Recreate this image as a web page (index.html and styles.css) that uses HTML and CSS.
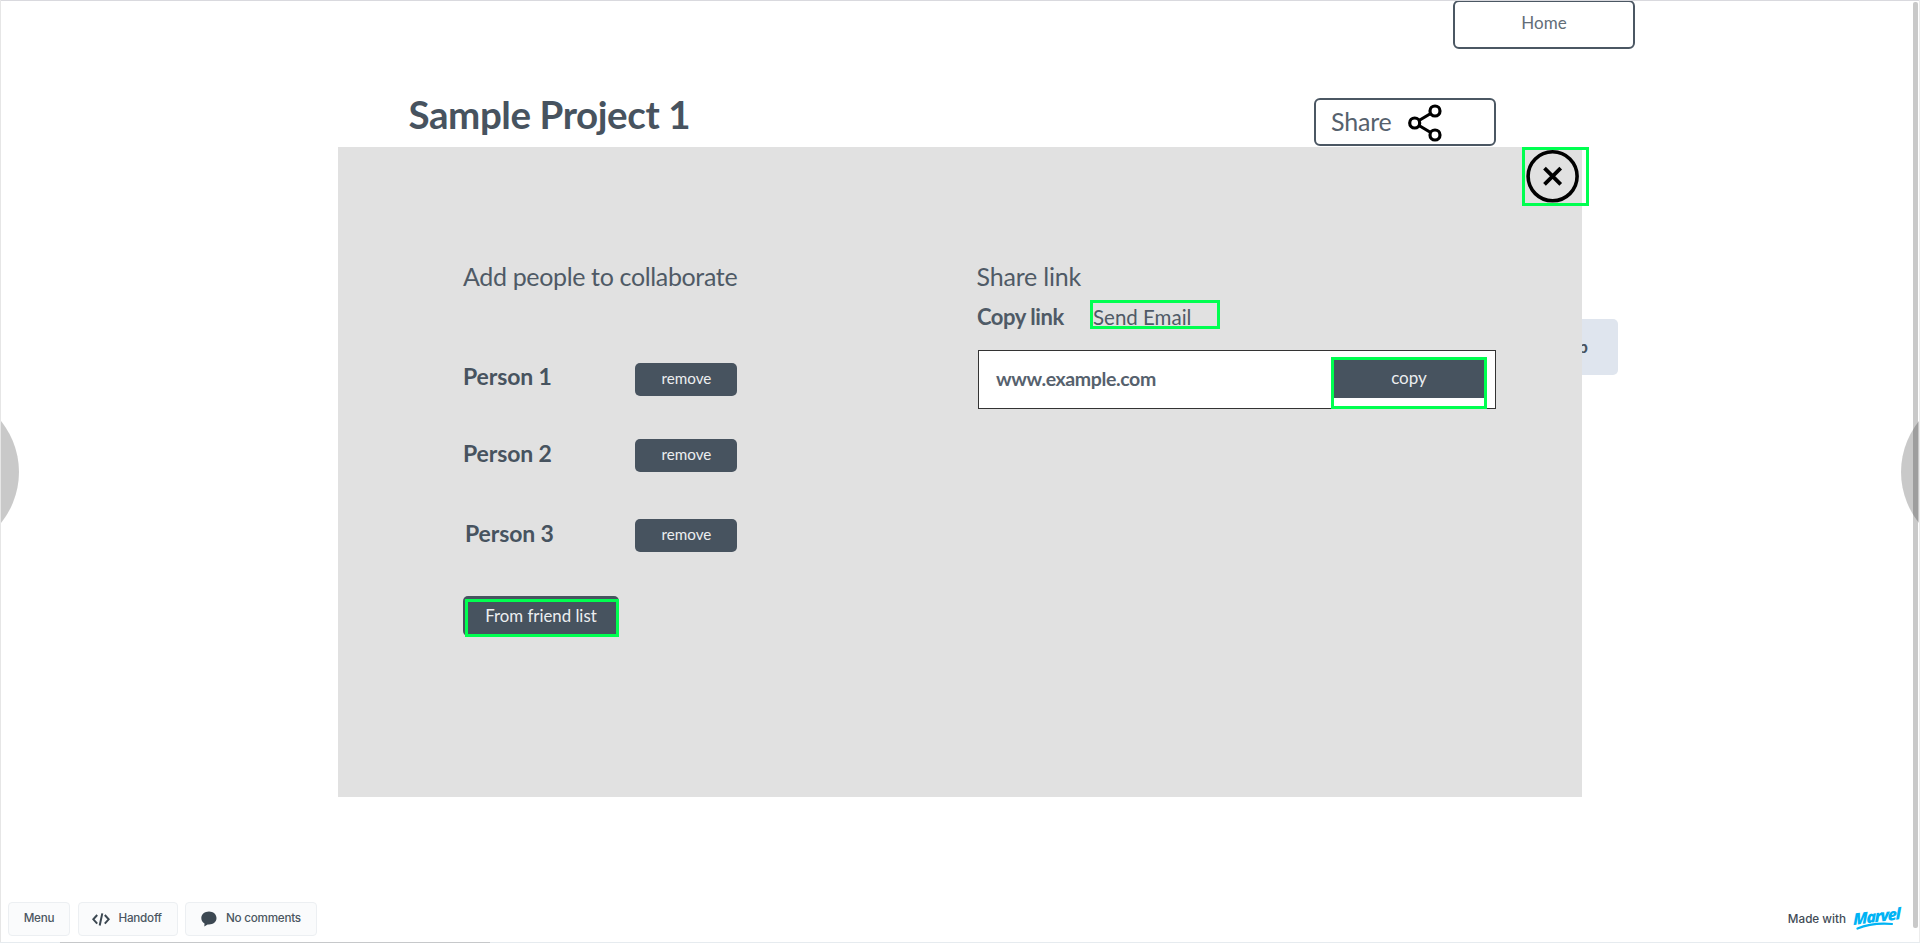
FILE: index.html
```html
<!DOCTYPE html>
<html lang="en">
<head>
<meta charset="utf-8">
<title>Sample Project 1</title>
<link rel="stylesheet" href="styles.css">
</head>
<body>
<main class="screen">
  <nav class="topnav"><button class="outline home"><span>Home</span></button></nav>
  <header class="project">
    <h1 class="title">Sample Project 1</h1>
    <button class="outline share"><span>Share</span>
      <svg class="share-icon" width="36" height="40" viewBox="0 0 36 40" fill="none" stroke="#000" stroke-width="3.2"><circle cx="7.7" cy="20" r="5"/><circle cx="28" cy="8" r="5"/><circle cx="28" cy="32" r="5"/><path d="M12 17.5 23.7 10.5M12 22.5 23.7 29.5"/></svg>
    </button>
  </header>
  <div class="behind"><span>p</span></div>
  <section class="panel">
    <div class="people">
      <h2 class="heading">Add people to collaborate</h2>
      <div class="person first"><span class="name">Person 1</span><button class="solid remove">remove</button></div>
      <div class="person second"><span class="name">Person 2</span><button class="solid remove">remove</button></div>
      <div class="person third"><span class="name">Person 3</span><button class="solid remove">remove</button></div>
      <button class="solid friends">From friend list<i class="hotspot hot-friends"></i></button>
    </div>
    <div class="links">
      <h2 class="heading short">Share link</h2>
      <div class="tabs"><b class="copy-tab">Copy link</b><span class="mail-tab">Send Email<i class="hotspot hot-mail"></i></span></div>
      <div class="field"><b class="url">www.example.com</b><button class="solid copy">copy<i class="hotspot hot-copy"></i></button></div>
    </div>
    <div class="close">
      <svg width="54" height="54" viewBox="0 0 54 54" fill="none" stroke="#000"><circle cx="27.6" cy="27.3" r="24.5" stroke-width="3.6"/><path d="M19.5 19.2 35.7 35.4M35.7 19.2 19.5 35.4" stroke-width="3.8"/></svg>
      <i class="hotspot hot-close"></i>
    </div>
  </section>
</main>
<footer class="toolbar">
  <button class="tool menu"><span>Menu</span></button>
  <button class="tool handoff"><svg width="18" height="13" viewBox="0 0 18 13" fill="none" stroke="#3c4852" stroke-width="2"><path d="M5.2 2 1.3 6.3 5.2 10.6M12.8 2 16.7 6.3 12.8 10.6M10.3.4 7.7 12.5"/></svg><span>Handoff</span></button>
  <button class="tool comments"><svg width="16" height="16" viewBox="0 0 16 16" fill="#3c4852"><path d="M8 .5C3.8.5.3 3.300.3 7c0 2.400 1.200 4.300 3.200 5.500L3.300 15.500 6.600 13.400C11.500 14 15.500 11.300 15.500 7 15.500 3.300 12.200.5 8 .5Z"/></svg><span>No comments</span></button>
  <div class="credit"><span>Made with</span><span class="brand"><em>Marvel</em><svg class="swoosh" width="40" height="9" viewBox="0 0 40 9"><path d="M1.500 7.500C11 3.500 23 2 36 3" fill="none" stroke="#00b3f4" stroke-width="2.200" stroke-linecap="round"/></svg></span></div>
</footer>
<div class="arrow left"></div>
<div class="scrollbar"></div>
<div class="arrow right"></div>
<div class="edge-top"></div><div class="edge-left"></div><div class="edge-right"></div>
<div class="edge-bottom"><i></i></div>
</body>
</html>
```

FILE: styles.css
```css
* { box-sizing: border-box; }
body { margin: 0; width: 1920px; height: 943px; position: relative; overflow: hidden; background: #fff; color: #47535f; font-family: Lato, sans-serif; }
button { font: inherit; color: inherit; margin: 0; padding: 0; border: 0; background: none; }
h1, h2 { margin: 0; }
.screen { height: 894px; }
.outline { width: 182px; height: 49px; border: 2px solid #4b5763; border-radius: 6px; background: #fff; display: flex; }
.topnav { display: flex; height: 49px; padding-left: 1453px; }
.home { justify-content: center; font-size: 17px; line-height: 41px; letter-spacing: .1px; color: #626d78; }
.project { display: flex; justify-content: space-between; height: 98px; padding: 0 424px 0 408.5px; }
.title { font-size: 38.5px; line-height: 48px; font-weight: 700; letter-spacing: -.42px; margin-top: 41px; }
.share { height: 48px; margin-top: 49px; padding-left: 15px; font-size: 25px; line-height: 43px; letter-spacing: -.2px; color: #56616d; }
.share-icon { margin: 2.5px 0 0 15.8px; }
.behind { position: absolute; left: 1500px; top: 319px; width: 118px; height: 56px; border-radius: 5px; background: #dfe5ee; font-size: 17px; font-weight: 700; line-height: 56px; text-align: right; padding-right: 30px; }
.panel { position: relative; width: 1244px; height: 650px; margin-left: 338px; padding: 114px 86px 0 125px; background: #e1e1e1; display: flex; justify-content: space-between; }
.people { width: 274px; }
.heading { font-size: 25px; line-height: 30px; font-weight: 400; letter-spacing: -.35px; white-space: nowrap; color: #4f5a66; }
.short { letter-spacing: -.2px; padding-left: .5px; }
.person { display: flex; justify-content: space-between; align-items: flex-start; height: 34px; }
.name { font-size: 23px; line-height: 31px; font-weight: 700; letter-spacing: -.12px; }
.first { margin-top: 70px; }
.second { margin-top: 42px; }
.second .name { line-height: 32px; }
.third { margin-top: 46px; padding-left: 2px; }
.third .name { line-height: 32px; }
.solid { position: relative; background: #47535f; color: #eceef0; border-radius: 5px; }
.remove { width: 102px; height: 33px; margin-top: 2px; padding: 0 0 2px 1px; font-size: 15.2px; line-height: 31px; }
.friends { display: block; width: 156px; height: 40px; margin-top: 45px; font-size: 16.8px; line-height: 40px; }
.links { width: 520px; }
.tabs { display: flex; gap: 29px; font-size: 22px; line-height: 30px; margin-top: 11px; padding-left: 1px; color: #4f5a66; }
.copy-tab { width: 87px; letter-spacing: -.45px; white-space: nowrap; }
.mail-tab { position: relative; font-size: 20.5px; line-height: 31px; height: 30px; }
.field { display: flex; justify-content: space-between; width: 518px; height: 59px; margin: 18px 0 0 2px; padding: 6px 11px 0 17px; background: #fff; border: 1px solid #333; }
.url { font-size: 19.5px; line-height: 44px; letter-spacing: -.38px; color: #56616d; }
.copy { width: 150px; height: 41px; font-size: 17px; line-height: 41px; border-radius: 0; }
.hotspot { position: absolute; border: 3px solid #00ff50; }
.hot-friends { left: 2px; top: 3px; width: 154px; height: 38px; }
.hot-mail { left: -3px; top: -2px; width: 130px; height: 29px; }
.hot-copy { left: -3px; top: 0; width: 156px; height: 52px; }
.close { position: absolute; left: 1187px; top: 2px; }
.hot-close { left: -3px; top: -2px; width: 67px; height: 59px; }
.toolbar { display: flex; height: 49px; padding: 8px 19px 0 8px; font-family: Inter, sans-serif; font-size: 11.7px; font-weight: 500; color: #4b5661; }
.tool { display: flex; align-items: center; height: 34px; background: #fafbfc; border: 1px solid #eceff2; border-radius: 4px; letter-spacing: -.25px; }
.tool span { padding-bottom: 2px; }
.menu { width: 62px; justify-content: center; }
.handoff { width: 100px; margin-left: 8px; padding-left: 12.5px; gap: 9px; }
.comments { width: 132px; margin-left: 7px; padding-left: 15px; gap: 9px; }
.credit { display: flex; margin-left: auto; line-height: 34px; gap: 7px; color: #414b55; }
.brand { position: relative; width: 48px; color: #00b3f4; }
.brand em { display: block; font: italic 800 16px/28px "Open Sans", sans-serif; letter-spacing: -1.3px; transform: rotate(-7deg) skewX(-6deg); transform-origin: 50% 50%; }
.swoosh { position: absolute; left: 3px; top: 19px; }
.arrow { position: absolute; top: 391px; width: 19px; height: 162px; background: rgba(0,0,0,.21); }
.left { left: 0; clip-path: circle(81px at -62px 50%); }
.right { right: 0; clip-path: circle(81px at 81px 50%); }
.scrollbar { position: absolute; left: 1913px; top: 2px; width: 5px; height: 926px; background: #c9c9c9; border-radius: 2px; }
.edge-top { position: absolute; left: 0; top: 0; width: 1920px; height: 1px; background: #d9d9de; }
.edge-left { position: absolute; left: 0; top: 0; width: 1px; height: 943px; background: #e6e6e6; }
.edge-right { position: absolute; right: 0; top: 0; width: 1px; height: 943px; background: #ececec; }
.edge-bottom { position: absolute; left: 0; top: 942px; width: 1920px; height: 1px; background: #e6ebef; padding-left: 60px; }
.edge-bottom i { display: block; width: 430px; height: 1px; background: #c6c8ca; }
```
